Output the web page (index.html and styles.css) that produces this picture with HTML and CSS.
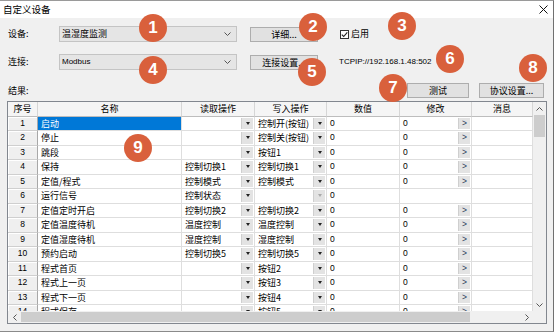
FILE: index.html
```html
<!DOCTYPE html>
<html lang="zh">
<head>
<meta charset="utf-8">
<title>自定义设备</title>
<link rel="stylesheet" href="styles.css">
</head>
<body>
<div class="window">
  <div class="titlebar">
    <span class="title">自定义设备</span>
    <svg class="close" width="9" height="9" viewBox="0 0 9 9"><path d="M0.5 0.5 L8.5 8.5 M8.5 0.5 L0.5 8.5" stroke="#111" stroke-width="1" fill="none"/></svg>
  </div>
  <div class="content">
    <div class="row row1">
      <span class="label">设备:</span>
      <div class="combo"><span>温湿度监测</span><svg width="7" height="4" viewBox="0 0 7 4"><polyline points="0.5,0.5 3.5,3.5 6.5,0.5" fill="none" stroke="#555" stroke-width="1"/></svg></div>
      <div class="btn btn-side">详细...</div>
      <div class="check"><span class="box"><svg width="7" height="7" viewBox="0 0 7 7"><polyline points="0.8,3.6 2.7,5.5 6.3,1.3" fill="none" stroke="#222" stroke-width="1.1"/></svg></span><span>启用</span></div>
    </div>
    <div class="row row2">
      <span class="label">连接:</span>
      <div class="combo"><span class="latin">Modbus</span><svg width="7" height="4" viewBox="0 0 7 4"><polyline points="0.5,0.5 3.5,3.5 6.5,0.5" fill="none" stroke="#555" stroke-width="1"/></svg></div>
      <div class="btn btn-side">连接设置...</div>
      <span class="addr">TCPIP://192.168.1.48:502</span>
    </div>
    <div class="row row3">
      <span class="label">结果:</span>
      <div class="actions">
        <div class="btn btn-test">测试</div>
        <div class="btn btn-proto">协议设置...</div>
      </div>
    </div>
    <div class="grid">
      <div class="viewport">
        <div class="cells">
          <div class="h">序号</div><div class="h">名称</div><div class="h">读取操作</div><div class="h">写入操作</div><div class="h">数值</div><div class="h">修改</div><div class="h">消息</div>

          <div class="rh">1</div><div class="c sel">启动</div><div class="c dd"><span></span><i></i></div><div class="c dd"><span>控制开(按钮)</span><i></i></div><div class="c num">0</div><div class="c go"><span class="num">0</span><b>&gt;</b></div><div class="c"></div>
          <div class="rh">2</div><div class="c">停止</div><div class="c dd"><span></span><i></i></div><div class="c dd"><span>控制关(按钮)</span><i></i></div><div class="c num">0</div><div class="c go"><span class="num">0</span><b>&gt;</b></div><div class="c"></div>
          <div class="rh">3</div><div class="c">跳段</div><div class="c dd"><span></span><i></i></div><div class="c dd"><span>按钮1</span><i></i></div><div class="c num">0</div><div class="c go"><span class="num">0</span><b>&gt;</b></div><div class="c"></div>
          <div class="rh">4</div><div class="c">保持</div><div class="c dd"><span>控制切换1</span><i></i></div><div class="c dd"><span>控制切换1</span><i></i></div><div class="c num">0</div><div class="c go"><span class="num">0</span><b>&gt;</b></div><div class="c"></div>
          <div class="rh">5</div><div class="c">定值/程式</div><div class="c dd"><span>控制模式</span><i></i></div><div class="c dd"><span>控制模式</span><i></i></div><div class="c num">0</div><div class="c go"><span class="num">0</span><b>&gt;</b></div><div class="c"></div>
          <div class="rh">6</div><div class="c">运行信号</div><div class="c dd"><span>控制状态</span><i></i></div><div class="c dd off"><span></span><i></i></div><div class="c num">0</div><div class="c"></div><div class="c"></div>
          <div class="rh">7</div><div class="c">定值定时开启</div><div class="c dd"><span>控制切换2</span><i></i></div><div class="c dd"><span>控制切换2</span><i></i></div><div class="c num">0</div><div class="c go"><span class="num">0</span><b>&gt;</b></div><div class="c"></div>
          <div class="rh">8</div><div class="c">定值温度待机</div><div class="c dd"><span>温度控制</span><i></i></div><div class="c dd"><span>温度控制</span><i></i></div><div class="c num">0</div><div class="c go"><span class="num">0</span><b>&gt;</b></div><div class="c"></div>
          <div class="rh">9</div><div class="c">定值湿度待机</div><div class="c dd"><span>湿度控制</span><i></i></div><div class="c dd"><span>湿度控制</span><i></i></div><div class="c num">0</div><div class="c go"><span class="num">0</span><b>&gt;</b></div><div class="c"></div>
          <div class="rh">10</div><div class="c">预约启动</div><div class="c dd"><span>控制切换5</span><i></i></div><div class="c dd"><span>控制切换5</span><i></i></div><div class="c num">0</div><div class="c go"><span class="num">0</span><b>&gt;</b></div><div class="c"></div>
          <div class="rh">11</div><div class="c">程式首页</div><div class="c dd"><span></span><i></i></div><div class="c dd"><span>按钮2</span><i></i></div><div class="c num">0</div><div class="c go"><span class="num">0</span><b>&gt;</b></div><div class="c"></div>
          <div class="rh">12</div><div class="c">程式上一页</div><div class="c dd"><span></span><i></i></div><div class="c dd"><span>按钮3</span><i></i></div><div class="c num">0</div><div class="c go"><span class="num">0</span><b>&gt;</b></div><div class="c"></div>
          <div class="rh">13</div><div class="c">程式下一页</div><div class="c dd"><span></span><i></i></div><div class="c dd"><span>按钮4</span><i></i></div><div class="c num">0</div><div class="c go"><span class="num">0</span><b>&gt;</b></div><div class="c"></div>
          <div class="rh">14</div><div class="c">程式保存</div><div class="c dd"><span></span><i></i></div><div class="c dd"><span>按钮5</span><i></i></div><div class="c num">0</div><div class="c go"><span class="num">0</span><b>&gt;</b></div><div class="c"></div>
        </div>
        <div class="vscroll">
          <div class="arrow"><svg width="7" height="4" viewBox="0 0 7 4"><polyline points="0.5,3.5 3.5,0.5 6.5,3.5" fill="none" stroke="#555" stroke-width="1"/></svg></div>
          <div class="vthumb"></div>
          <div class="vtrack"></div>
          <div class="arrow"><svg width="7" height="4" viewBox="0 0 7 4"><polyline points="0.5,0.5 3.5,3.5 6.5,0.5" fill="none" stroke="#555" stroke-width="1"/></svg></div>
        </div>
      </div>
      <div class="hbar">
        <div class="hscroll">
          <div class="harrow"><svg width="4" height="7" viewBox="0 0 4 7"><polyline points="3.5,0.5 0.5,3.5 3.5,6.5" fill="none" stroke="#555" stroke-width="1"/></svg></div>
          <div class="hthumb"></div>
          <div class="htrack"></div>
          <div class="harrow"><svg width="4" height="7" viewBox="0 0 4 7"><polyline points="0.5,0.5 3.5,3.5 0.5,6.5" fill="none" stroke="#555" stroke-width="1"/></svg></div>
        </div>
        <div class="corner"></div>
      </div>
    </div>
  </div>

  <span class="badge b1">1</span>
  <span class="badge b2">2</span>
  <span class="badge b3">3</span>
  <span class="badge b4">4</span>
  <span class="badge b5">5</span>
  <span class="badge b6">6</span>
  <span class="badge b7">7</span>
  <span class="badge b8">8</span>
  <span class="badge b9">9</span>
</div>
</body>
</html>
```

FILE: styles.css
```css
* { box-sizing: border-box; }
html, body { margin: 0; padding: 0; }
body {
  width: 554px;
  height: 333px;
  overflow: hidden;
  background: #ffffff;
  font-family: "Noto Sans CJK SC", "Noto Sans", sans-serif;
  font-size: 9px;
  font-weight: 400;
  color: #000;
}
.window {
  position: relative;
  width: 554px;
  height: 332px;
  background: #f0f0f0;
  border-top: 1px solid #9a9a9a;
  border-right: 1px solid #707070;
  border-bottom: 1px solid #8a8a8a;
}
.titlebar {
  height: 17px;
  background: #fff;
  display: flex;
  align-items: center;
  justify-content: space-between;
  padding: 0 5px 0 3px;
}
.title { font-size: 9.5px; line-height: 17px; }
.content { padding: 8px 6px 0 7px; }
.row { display: flex; align-items: center; }
.row1 { height: 16px; }
.row2 { height: 16px; margin-top: 12px; }
.row3 { height: 15px; margin-top: 13px; padding-right: 3px; }
.label { width: 52px; padding-left: 1px; line-height: 14px; }
.combo {
  width: 178px;
  height: 16px;
  background: #e5e5e5;
  border: 1px solid #c4c4c4;
  display: flex;
  align-items: center;
  justify-content: space-between;
  padding: 0 5px 0 2px;
  line-height: 14px;
}
.latin { font-family: "Liberation Sans", Arial, sans-serif; font-size: 8px; }
.btn {
  height: 15px;
  background: #e1e1e1;
  border: 1px solid #adadad;
  display: flex;
  align-items: center;
  justify-content: center;
  line-height: 13px;
}
.btn-side { width: 68px; margin-left: 13px; }
.check { display: flex; align-items: center; margin-left: 22px; gap: 2px; line-height: 14px; }
.box {
  width: 9px; height: 9px;
  border: 1px solid #333;
  background: #fff;
  display: flex; align-items: center; justify-content: center;
}
.addr {
  margin-left: 21px;
  font-family: "Liberation Sans", Arial, sans-serif;
  font-size: 8px;
  line-height: 14px;
}
.actions { margin-left: auto; display: flex; gap: 10px; }
.btn-test { width: 62px; }
.btn-proto { width: 65px; }

.grid {
  margin-top: 3px;
  width: 540px;
  height: 223px;
  border: 1px solid #82878f;
  background: #fff;
  display: flex;
  flex-direction: column;
}
.viewport { display: flex; height: 209px; }
.cells {
  width: 525px;
  height: 209px;
  overflow: hidden;
  display: grid;
  grid-template-columns: 30px 144px 73px 72px 73px 72px 61px;
  grid-auto-rows: 14.5px;
  align-content: start;
  background: #fff;
}
.h {
  background: #f5f5f5;
  border-right: 1px solid #d6d6d6;
  border-bottom: 1px solid #bdbdbd;
  text-align: center;
  line-height: 13px;
}
.rh {
  background: #efefef;
  border-right: 1px solid #a8a8a8;
  border-bottom: 1px solid #cfcfcf;
  box-shadow: inset 1px 1px 0 #fff;
  text-align: center;
  line-height: 13px;
  font-family: "Liberation Sans", Arial, sans-serif;
  font-size: 8.5px;
}
.c {
  border-right: 1px solid #dedede;
  border-bottom: 1px solid #dedede;
  padding-left: 3px;
  line-height: 13px;
  white-space: nowrap;
  overflow: hidden;
}
.num { font-family: "Liberation Sans", Arial, sans-serif; font-size: 8.5px; }
.sel { background: #0078d7; color: #fff; }
.dd, .go { display: flex; padding-right: 1px; }
.dd span, .go span { flex: 1; }
.dd i {
  width: 12px;
  margin: 1px 0 1px 0;
  background: #e3e3e3;
  border-left: 1px solid #cfcfcf;
  display: flex;
  align-items: center;
  justify-content: center;
}
.dd i::after {
  content: "";
  width: 0; height: 0;
  border-left: 2.5px solid transparent;
  border-right: 2.5px solid transparent;
  border-top: 3px solid #222;
}
.dd.off i::after { border-top-color: #aaa; }
.go b {
  width: 12px;
  margin: 1px 0;
  background: #e3e3e3;
  border-left: 1px solid #cfcfcf;
  font-family: "Liberation Sans", Arial, sans-serif;
  font-weight: normal;
  font-size: 8.5px;
  color: #2a3a5a;
  text-align: center;
  line-height: 11px;
}
.vscroll {
  width: 13px;
  background: #f0f0f0;
  display: flex;
  flex-direction: column;
}
.arrow { height: 13px; display: flex; align-items: center; justify-content: center; }
.vthumb { height: 22px; margin: 0 1px 0 1px; background: #cdcdcd; }
.vtrack { flex: 1; }
.hbar { display: flex; height: 12px; }
.hscroll { width: 525px; display: flex; background: #f0f0f0; }
.harrow { width: 13px; display: flex; align-items: center; justify-content: center; }
.hthumb { width: 449px; margin: 1px 0; background: #cdcdcd; }
.htrack { flex: 1; }
.corner { flex: 1; background: #f0f0f0; }

.badge {
  position: absolute;
  width: 28px;
  height: 28px;
  border-radius: 50%;
  background: #d9603c;
  color: #fff;
  font-family: "Liberation Sans", Arial, sans-serif;
  font-weight: bold;
  font-size: 17px;
  display: flex;
  align-items: center;
  justify-content: center;
}
.b1 { left: 139px; top: 13px; }
.b2 { left: 299px; top: 12px; }
.b3 { left: 388px; top: 11px; }
.b4 { left: 139px; top: 55px; }
.b5 { left: 298px; top: 57px; }
.b6 { left: 436px; top: 44px; }
.b7 { left: 379px; top: 73px; }
.b8 { left: 519px; top: 53px; }
.b9 { left: 124px; top: 133px; }
```
